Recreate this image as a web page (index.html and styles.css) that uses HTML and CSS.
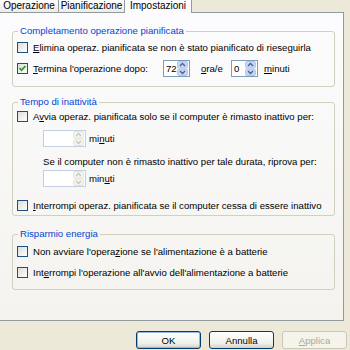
FILE: index.html
```html
<!DOCTYPE html>
<html>
<head>
    <meta charset="UTF-8">
    <meta name="viewport" content="width=device-width">
    <title>Impostazioni operazione pianificata</title>
    <link rel="stylesheet" href="styles.css">
</head>
<body>
<div class="dialog">
    <div class="tabs">
        <div class="tab t1">Operazione</div>
        <div class="tab t2">Pianificazione</div>
        <div class="tab t3 active">Impostazioni</div>
    </div>

    <div class="page">
        <fieldset class="group g1">
            <legend>Completamento operazione pianificata</legend>
            <div class="row">
                <span class="check"></span>
                <span><u>E</u>limina operaz. pianificata se non è stato pianificato di rieseguirla</span>
            </div>
            <div class="row">
                <span class="check">
                    <svg width="9" height="9" viewBox="0 0 9 9"><path d="M1.5 4 L3.5 6.2 L7.5 2" fill="none" stroke="#21a121" stroke-width="1.7"/></svg>
                </span>
                <span class="lbl-dopo"><u>T</u>ermina l'operazione dopo:</span>
                <span class="spin small">
                    <span class="val">72</span>
                    <svg width="11" height="15" viewBox="0 0 11 15">
                        <rect x="0.5" y="0.5" width="10" height="6.5" rx="1.5" fill="#c6d4f7" stroke="#b3c5f1"/>
                        <rect x="0.5" y="8" width="10" height="6.5" rx="1.5" fill="#c6d4f7" stroke="#b3c5f1"/>
                        <path d="M3 5 L5.5 2.5 L8 5" fill="none" stroke="#4d6185" stroke-width="1.3"/>
                        <path d="M3 10 L5.5 12.5 L8 10" fill="none" stroke="#4d6185" stroke-width="1.3"/>
                    </svg>
                </span>
                <span class="lbl-ore"><u>o</u>ra/e</span>
                <span class="spin small">
                    <span class="val">0</span>
                    <svg width="11" height="15" viewBox="0 0 11 15">
                        <rect x="0.5" y="0.5" width="10" height="6.5" rx="1.5" fill="#c6d4f7" stroke="#b3c5f1"/>
                        <rect x="0.5" y="8" width="10" height="6.5" rx="1.5" fill="#c6d4f7" stroke="#b3c5f1"/>
                        <path d="M3 5 L5.5 2.5 L8 5" fill="none" stroke="#4d6185" stroke-width="1.3"/>
                        <path d="M3 10 L5.5 12.5 L8 10" fill="none" stroke="#4d6185" stroke-width="1.3"/>
                    </svg>
                </span>
                <span class="lbl-min"><u>m</u>inuti</span>
            </div>
        </fieldset>

        <fieldset class="group g2">
            <legend>Tempo di inattività</legend>
            <div class="row r-avvia">
                <span class="check"></span>
                <span>A<u>v</u>via operaz. pianificata solo se il computer è rimasto inattivo per:</span>
            </div>
            <div class="sub sub-spin1">
                <span class="spin wide disabled">
                    <span class="val"></span>
                    <svg width="11" height="15" viewBox="0 0 11 15">
                        <rect x="0.5" y="0.5" width="10" height="6.5" rx="1.5" fill="#f5f4ef" stroke="#e4e3dc"/>
                        <rect x="0.5" y="8" width="10" height="6.5" rx="1.5" fill="#f5f4ef" stroke="#e4e3dc"/>
                        <path d="M3 5 L5.5 2.5 L8 5" fill="none" stroke="#c9c7ba" stroke-width="1.3"/>
                        <path d="M3 10 L5.5 12.5 L8 10" fill="none" stroke="#c9c7ba" stroke-width="1.3"/>
                    </svg>
                </span>
                <span>mi<u>n</u>uti</span>
            </div>
            <div class="sub sub-text">Se il computer non è rimasto inattivo per tale durata, riprova per:</div>
            <div class="sub sub-spin2">
                <span class="spin wide disabled">
                    <span class="val"></span>
                    <svg width="11" height="15" viewBox="0 0 11 15">
                        <rect x="0.5" y="0.5" width="10" height="6.5" rx="1.5" fill="#f5f4ef" stroke="#e4e3dc"/>
                        <rect x="0.5" y="8" width="10" height="6.5" rx="1.5" fill="#f5f4ef" stroke="#e4e3dc"/>
                        <path d="M3 5 L5.5 2.5 L8 5" fill="none" stroke="#c9c7ba" stroke-width="1.3"/>
                        <path d="M3 10 L5.5 12.5 L8 10" fill="none" stroke="#c9c7ba" stroke-width="1.3"/>
                    </svg>
                </span>
                <span>min<u>u</u>ti</span>
            </div>
            <div class="row r-interr">
                <span class="check"></span>
                <span><u>I</u>nterrompi operaz. pianificata se il computer cessa di essere inattivo</span>
            </div>
        </fieldset>

        <fieldset class="group g3">
            <legend>Risparmio energia</legend>
            <div class="row">
                <span class="check"></span>
                <span>Non avviare l'opera<u>z</u>ione se l'alimentazione è a batterie</span>
            </div>
            <div class="row">
                <span class="check"></span>
                <span>Int<u>e</u>rrompi l'operazione all'avvio dell'alimentazione a batterie</span>
            </div>
        </fieldset>
    </div>

    <div class="buttons">
        <button class="btn default">OK</button>
        <button class="btn">Annulla</button>
        <button class="btn" disabled><u>A</u>pplica</button>
    </div>
</div>
</body>
</html>
```

FILE: styles.css
```css
/* XP style property sheet, "Impostazioni" tab */

body {
    margin: 0;
    padding: 0;
    background: #ece9d8;
    font-family: "Liberation Sans", Arial, sans-serif;
    font-size: 9.6px;
    color: #000;
}

.dialog {
    width: 350px;
    height: 350px;
    overflow: hidden;
}

/* tabs */

.tabs {
    display: flex;
    height: 12px;
}

.tab {
    box-sizing: border-box;
    height: 12px;
    border-right: 1px solid #919b9c;
    background: linear-gradient(#fefefe, #ecebe6);
    font-size: 10px;
    line-height: 11px;
    text-align: center;
}

.t1 { width: 59px; }
.t2 { width: 66px; }
.t3 { width: 67px; }

.tab.active {
    position: relative;
    z-index: 1;
    height: 13px;
    background: #fcfcfe;
}

/* page */

.page {
    box-sizing: border-box;
    width: 344px;
    height: 309px;
    padding-top: 12px;
    border: 1px solid #919b9c;
    border-left: none;
    background: linear-gradient(#fcfcfe, #f4f3ee);
}

.group {
    box-sizing: border-box;
    width: 323px;
    min-width: 0;
    margin: 0 0 0 12px;
    padding: 0 4px 7px 4px;
    border: 1px solid #d0d0bf;
    border-radius: 3px;
}

.group legend {
    margin-left: 1px;
    padding: 0 2px;
    color: #0046d5;
    line-height: 12px;
}

.g2 {
    margin-top: 9px;
    padding-bottom: 1px;
}

.g3 {
    margin-top: 12px;
    padding-top: 1px;
    padding-bottom: 6px;
}

.row {
    display: flex;
    align-items: center;
    height: 21px;
    white-space: nowrap;
}

.r-avvia { height: 16px; }
.r-interr { height: 18px; margin-top: 9px; }

.sub {
    display: flex;
    align-items: center;
    margin-left: 26px;
    white-space: nowrap;
}

.sub-spin1 { margin-top: 6px; }
.sub-text { margin-top: 8px; height: 12px; }
.sub-spin2 { margin-top: 3px; }

.check {
    box-sizing: border-box;
    flex: none;
    display: flex;
    align-items: center;
    justify-content: center;
    width: 11px;
    height: 11px;
    margin-right: 5px;
    border: 1px solid #1c5180;
    background: linear-gradient(135deg, #dcdcd7, #ffffff);
}

.lbl-dopo { width: 130px; }
.lbl-ore { width: 30px; margin-left: 11px; }
.lbl-min { margin-left: 6px; }

/* spin boxes */

.spin {
    box-sizing: border-box;
    display: flex;
    align-items: center;
    height: 17px;
    padding-right: 1px;
    border: 1px solid #7f9db9;
    background: #fff;
}

.spin.small { width: 27px; }
.spin.wide { width: 43px; margin-right: 3px; }

.spin.disabled { border-color: #c3d0e3; }

.spin .val {
    flex: 1;
    padding-left: 2px;
}

/* bottom buttons */

.buttons {
    display: flex;
    justify-content: flex-end;
    gap: 8px;
    padding: 10px 3px 0 0;
}

.btn {
    box-sizing: border-box;
    width: 65px;
    height: 18px;
    padding: 0;
    border: 1px solid #003c74;
    border-radius: 3px;
    background: linear-gradient(#ffffff, #f0f0ea 70%, #d6d0c5);
    font-family: "Liberation Sans", Arial, sans-serif;
    font-size: 9.6px;
    color: #000;
}

.btn.default {
    box-shadow: inset 0 0 0 1px #98b8ea;
}

.btn:disabled {
    border-color: #c9c7ba;
    background: #f5f4ea;
    color: #aca899;
}
```
